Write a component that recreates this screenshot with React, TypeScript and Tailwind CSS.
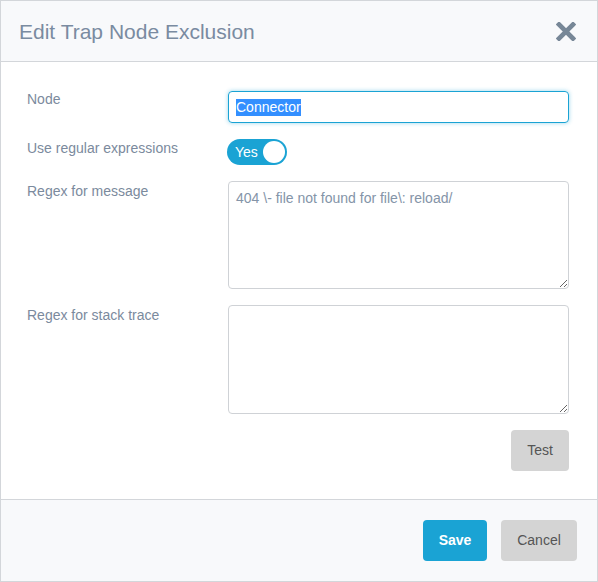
import React from 'react'

const font = { fontFamily: '"Liberation Sans", Arial, sans-serif' }

const CloseIcon = () => (
  <svg width="20" height="19" viewBox="0 0 20 19" aria-hidden="true">
    <path d="M3 2.5 L17 16.5 M17 2.5 L3 16.5" stroke="#778797" strokeWidth="4.6" strokeLinecap="square" />
  </svg>
)

export default function App() {
  return (
    <div
      className="w-[598px] h-[582px] border border-[#d3d6da] bg-white flex flex-col text-[14px] text-[#7b8a9d]"
      style={font}
    >
      {/* Заголовок */}
      <div className="h-[61px] shrink-0 bg-[#f8f9fb] border-b border-[#d3d6da] flex items-center justify-between pl-[18px] pr-[21px]">
        <h1 className="text-[21px] leading-none text-[#7a8ba1] mt-[1px]">Edit Trap Node Exclusion</h1>
        <button className="mt-[1px]" aria-label="Close">
          <CloseIcon />
        </button>
      </div>

      {/* Форма */}
      <div className="flex-1 pt-[29px] pl-[26px] pr-[28px] flex flex-col">
        <div className="flex items-start">
          <label className="w-[201px] leading-5 -mt-[2px]">Node</label>
          <div className="flex-1 h-[32px] rounded-[4px] border border-[#1aa3d4] shadow-[0_0_4px_rgba(26,163,212,0.45)] flex items-center px-[7px]">
            <span className="bg-[#338fff] text-white leading-[17px]">Connector</span>
          </div>
        </div>

        <div className="flex items-start mt-[16px]">
          <label className="w-[201px] leading-5 -mt-[1px]">Use regular expressions</label>
          <button className="w-[60px] h-[26px] rounded-full bg-[#1aa3d4] flex items-center justify-between pl-[8px] pr-[2px] -ml-[1px]">
            <span className="text-white text-[14px]">Yes</span>
            <span className="w-[22px] h-[22px] rounded-full bg-white" />
          </button>
        </div>

        <div className="flex items-start mt-[16px]">
          <label className="w-[201px] leading-5">Regex for message</label>
          <textarea
            className="flex-1 h-[108px] rounded-[4px] border border-[#cfd2d6] px-[7px] py-[6px] text-[14px] text-[#8494a8] outline-none"
            defaultValue={'404 \\- file not found for file\\: reload/'}
          />
        </div>

        <div className="flex items-start mt-[16px]">
          <label className="w-[201px] leading-5">Regex for stack trace</label>
          <textarea className="flex-1 h-[109px] rounded-[4px] border border-[#cfd2d6] px-[7px] py-[6px] text-[14px] outline-none" />
        </div>

        <div className="flex justify-end mt-[16px]">
          <button className="w-[58px] h-[41px] rounded-[4px] bg-[#d4d4d4] text-[#555] text-[14px]">Test</button>
        </div>
      </div>

      {/* Подвал */}
      <div className="h-[82px] shrink-0 bg-[#f8f9fb] border-t border-[#d3d6da] flex justify-end items-start pt-[20px] pr-[20px] gap-[14px]">
        <button className="w-[64px] h-[41px] rounded-[4px] bg-[#1aa3d4] text-white font-bold text-[14px]">Save</button>
        <button className="w-[76px] h-[41px] rounded-[4px] bg-[#d4d4d4] text-[#555] text-[14px]">Cancel</button>
      </div>
    </div>
  )
}
